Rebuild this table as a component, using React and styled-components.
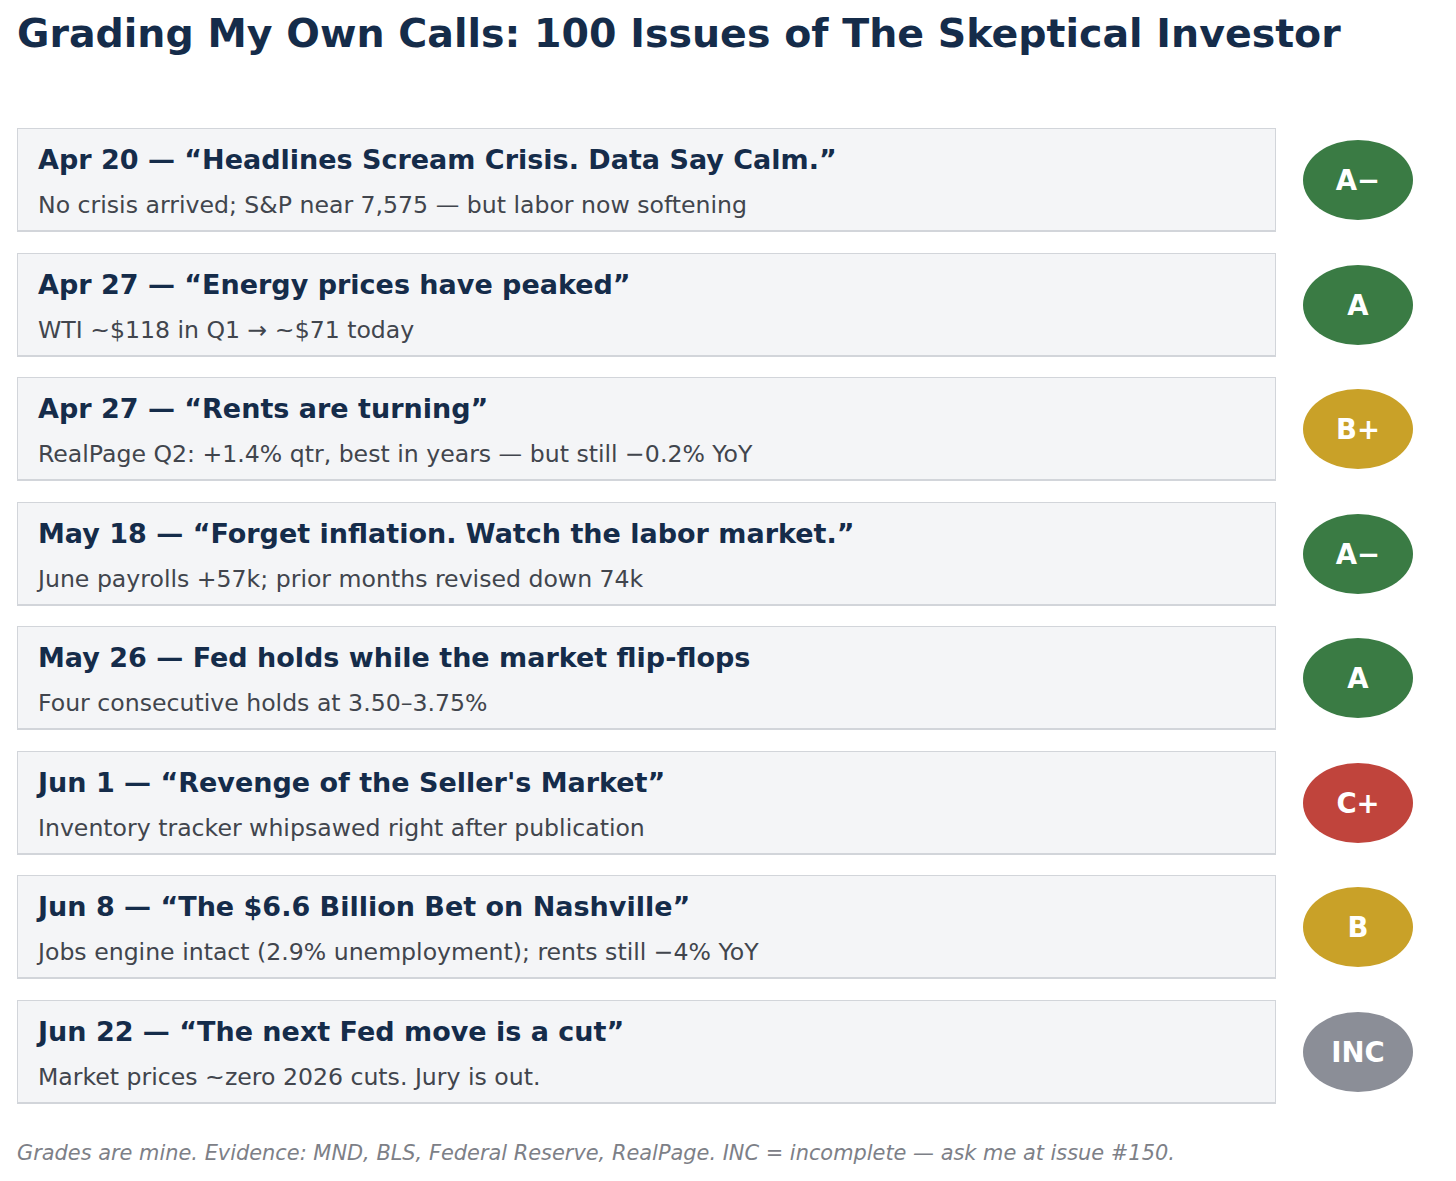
import React from "react"
import styled, { createGlobalStyle } from "styled-components"

const GlobalStyle = createGlobalStyle`
  body {
    margin: 0;
    background: #fff;
    font-family: "DejaVu Sans", "Liberation Sans", sans-serif;
  }
`

const calls = [
  { title: "Apr 20 — “Headlines Scream Crisis. Data Say Calm.”", note: "No crisis arrived; S&P near 7,575 — but labor now softening", grade: "A−", tone: "green" },
  { title: "Apr 27 — “Energy prices have peaked”", note: "WTI ~$118 in Q1 → ~$71 today", grade: "A", tone: "green" },
  { title: "Apr 27 — “Rents are turning”", note: "RealPage Q2: +1.4% qtr, best in years — but still −0.2% YoY", grade: "B+", tone: "gold" },
  { title: "May 18 — “Forget inflation. Watch the labor market.”", note: "June payrolls +57k; prior months revised down 74k", grade: "A−", tone: "green" },
  { title: "May 26 — Fed holds while the market flip-flops", note: "Four consecutive holds at 3.50–3.75%", grade: "A", tone: "green" },
  { title: "Jun 1 — “Revenge of the Seller's Market”", note: "Inventory tracker whipsawed right after publication", grade: "C+", tone: "red" },
  { title: "Jun 8 — “The $6.6 Billion Bet on Nashville”", note: "Jobs engine intact (2.9% unemployment); rents still −4% YoY", grade: "B", tone: "gold" },
  { title: "Jun 22 — “The next Fed move is a cut”", note: "Market prices ~zero 2026 cuts. Jury is out.", grade: "INC", tone: "grey" },
]

const tones = {
  green: "#3a7b44",
  gold: "#c9a128",
  red: "#c0443c",
  grey: "#8b8e97",
}

const App = () => {
  return (
    <Page>
      <GlobalStyle />
      <Title>Grading My Own Calls: 100 Issues of The Skeptical Investor</Title>
      <List>
        {calls.map((c, i) => (
          <Row key={i}>
            <Card>
              <CardTitle>{c.title}</CardTitle>
              <CardNote>{c.note}</CardNote>
            </Card>
            <Grade tone={c.tone}>{c.grade}</Grade>
          </Row>
        ))}
      </List>
      <Footer>Grades are mine. Evidence: MND, BLS, Federal Reserve, RealPage. INC = incomplete — ask me at issue #150.</Footer>
    </Page>
  )
}

export default App

const Page = styled.div`
  padding: 10px 43px 20px 17px;
`

const Title = styled.h1`
  margin: 0 0 72px;
  font-size: 39.5px;
  line-height: 46px;
  font-weight: 700;
  color: #152c4a;
  white-space: nowrap;
`

const List = styled.div`
  display: flex;
  flex-direction: column;
  gap: 20.5px;
`

const Row = styled.div`
  display: flex;
  align-items: center;
  gap: 27px;
`

const Card = styled.div`
  flex: 1;
  box-sizing: border-box;
  height: 104px;
  padding: 16px 20px 0;
  background: #f4f5f7;
  border: 1.5px solid #d2d5da;
  border-bottom-width: 2px;
`

const CardTitle = styled.div`
  font-size: 27px;
  line-height: 30px;
  font-weight: 700;
  color: #152c4a;
  white-space: nowrap;
`

const CardNote = styled.div`
  margin-top: 16px;
  font-size: 23.6px;
  line-height: 28px;
  color: #41454d;
  white-space: nowrap;
`

const Grade = styled.div`
  flex: none;
  width: 110px;
  height: 80px;
  border-radius: 50%;
  display: flex;
  align-items: center;
  justify-content: center;
  background: ${(p) => tones[p.tone]};
  color: #fff;
  font-size: 27.5px;
  font-weight: 700;
`

const Footer = styled.div`
  margin-top: 37px;
  font-size: 20.9px;
  font-style: italic;
  color: #7d8087;
  white-space: nowrap;
`
